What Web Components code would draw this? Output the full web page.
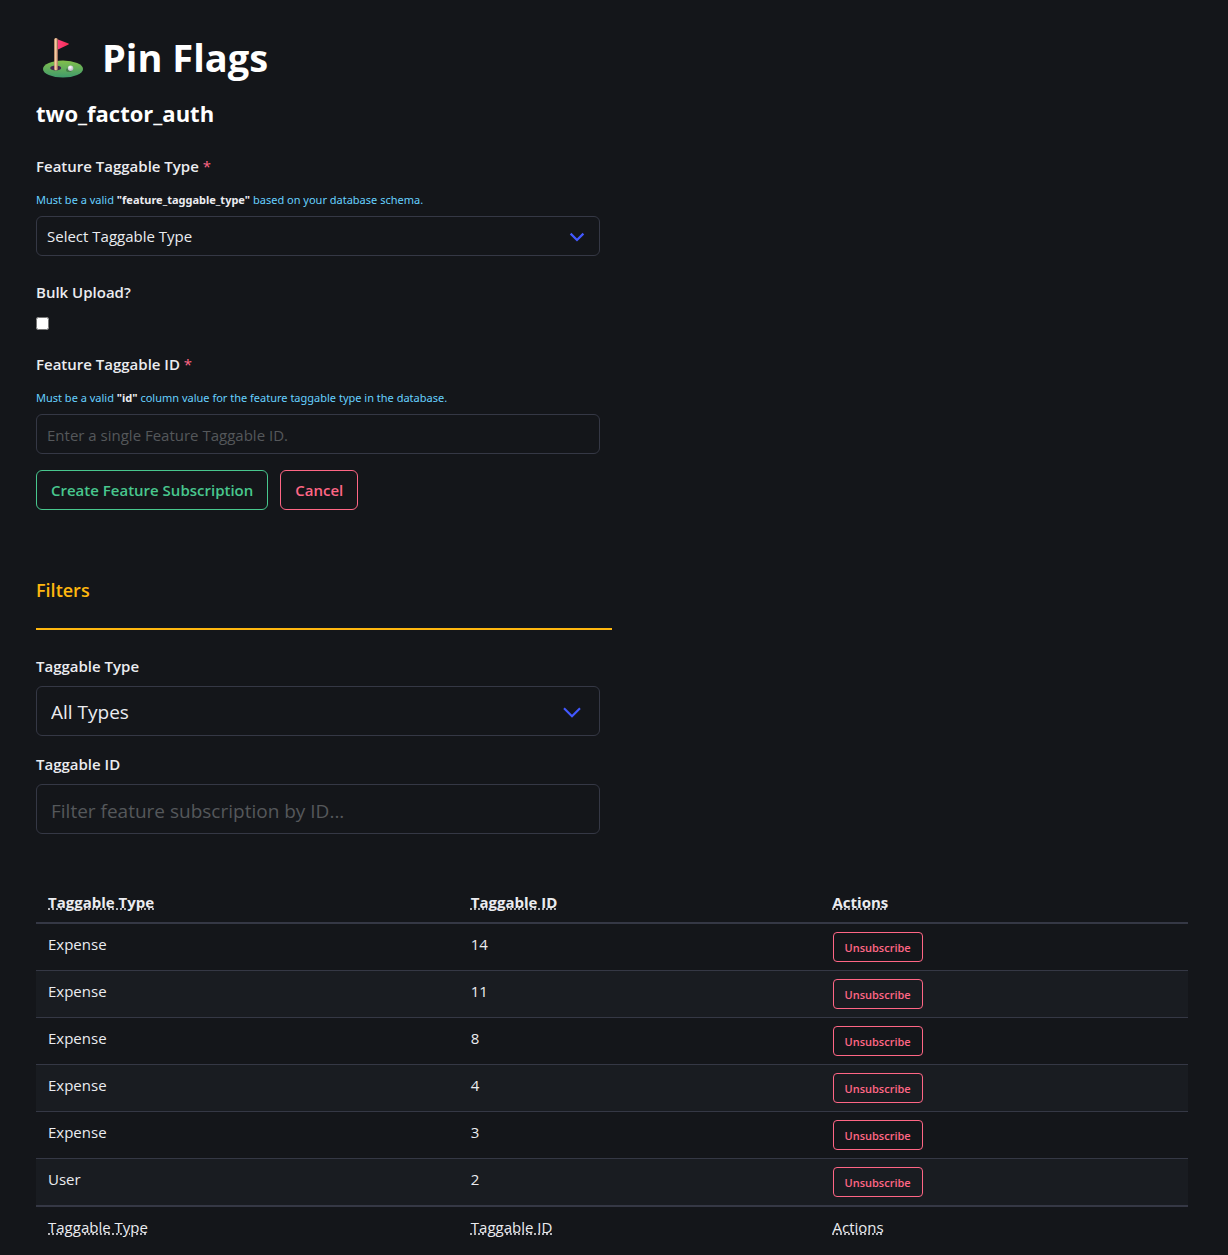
<!DOCTYPE html>
<html lang="en">
<head>
<meta charset="utf-8">
<title>Pin Flags</title>
<meta name="viewport" content="width=device-width, initial-scale=1">
<style>
:root {
  --bg: #14161a;
  --text: #ebecf0;
  --strong: #ffffff;
  --border: #353845;
  --stripe: #191c21;
  --placeholder: #55585b;
  --link: #4258ff;
  --info: #66d1ff;
  --success: #48c78e;
  --danger: #ff6685;
  --warning: #ffb70f;
}
body {
  margin: 0;
  background: var(--bg);
  color: var(--text);
  font: 15px/24px "Open Sans", "Noto Sans", sans-serif;
}
</style>
</head>
<body>
<pin-page>
  <pin-masthead slot="header" feature="two_factor_auth"></pin-masthead>
  <pin-subscribe-form></pin-subscribe-form>
  <pin-filters></pin-filters>
  <pin-table></pin-table>
</pin-page>

<script>
class PinElement extends HTMLElement {
  connectedCallback() {
    if (this.shadowRoot) return;
    this.attachShadow({ mode: "open" }).innerHTML =
      `<style>:host,*{box-sizing:border-box}${this.styles()}</style>${this.markup()}`;
  }
}

customElements.define("pin-page", class extends PinElement {
  styles() {
    return `
      :host { display: block; padding: 35px 40px 4px 36px; }
      main { display: flex; flex-direction: column; }`;
  }
  markup() { return `<slot name="header"></slot><main><slot></slot></main>`; }
});

customElements.define("pin-masthead", class extends PinElement {
  styles() {
    return `
      :host { display: block; color: var(--strong); }
      h1, h2 { margin: 0; font-weight: 700; }
      h1 { display: flex; align-items: center; gap: 12px; font-size: 38px; line-height: 45px; }
      h2 { margin-top: 18px; font-size: 22px; line-height: 30px; }
      svg { width: 54px; height: 45px; flex: none; }`;
  }
  markup() {
    return `
      <h1>
        <svg viewBox="0 -1 54 45" aria-hidden="true">
          <defs>
            <linearGradient id="turf" x1="0" y1="0" x2="0" y2="1">
              <stop offset="0" stop-color="#83bf4b"/><stop offset="1" stop-color="#3f9a6c"/>
            </linearGradient>
            <linearGradient id="pole">
              <stop offset="0" stop-color="#d99b78"/><stop offset=".4" stop-color="#f8d3a5"/><stop offset="1" stop-color="#b8755e"/>
            </linearGradient>
            <linearGradient id="flag">
              <stop offset="0" stop-color="#ff3d7c"/><stop offset="1" stop-color="#f5304f"/>
            </linearGradient>
            <radialGradient id="ball" cx=".4" cy=".3" r=".8">
              <stop offset="0" stop-color="#ffffff"/><stop offset="1" stop-color="#a9a4b4"/>
            </radialGradient>
          </defs>
          <ellipse cx="27" cy="33" rx="20" ry="8.600" fill="url(#turf)"/>
          <ellipse cx="19.700" cy="32" rx="5.500" ry="2.500" fill="#40264f"/>
          <path d="M22 3.500 L32.500 7.500 Q33.300 8 32.500 8.600 L22 13.400Z" fill="url(#flag)"/>
          <path d="M18.200 3.500 Q18.200 2 20 2 Q21.800 2 21.800 3.500 V33.500 Q20 35.200 18.200 33.500Z" fill="url(#pole)"/>
          <ellipse cx="33" cy="34" rx="3" ry="2" fill="#45804a"/>
          <circle cx="34.600" cy="32.300" r="2.700" fill="url(#ball)"/>
        </svg>
        <span>Pin Flags</span>
      </h1>
      <h2>${this.getAttribute("feature")}</h2>`;
  }
});

/* One labelled control: kind = select | text | check; size = normal | large */
customElements.define("pin-field", class extends PinElement {
  styles() {
    return `
      :host { display: block; }
      label { display: block; font-weight: 600; }
      label i { font-style: normal; font-weight: 400; color: var(--danger); }
      p { margin: 13px 0 7px; font-family: "Noto Sans", sans-serif; font-size: 11px; line-height: 18px; color: var(--info); }
      ::slotted(strong) { color: var(--text); font-weight: 700; }
      .control { display: grid; align-items: center; }
      .control > * { grid-area: 1 / 1; }
      .control.bare { margin-top: 8px; }
      select, input[type=text] {
        appearance: none; width: 100%; height: 40px; margin: 0; padding: 0 10px;
        border: 1px solid var(--border); border-radius: 6px; outline: 0;
        background: var(--bg); color: var(--text); font: inherit;
      }
      input[type=text] { padding-top: 2px; }
      .large select, .large input { height: 50px; padding: 2px 14px 0; font-size: 19px; }
      .large input { padding-top: 4px; }
      select:focus, input:focus { border-color: var(--link); }
      input::placeholder { color: var(--placeholder); opacity: 1; }
      svg { justify-self: end; width: 16px; height: 10px; margin: 2px 15px 0 0; pointer-events: none;
            fill: none; stroke: var(--link); stroke-width: 2.200; }
      .large svg { width: 20px; height: 13px; margin-right: 18px; stroke-width: 1.700; }
      input[type=checkbox] { display: block; width: 13px; height: 13px; margin: 13px 0 0; }`;
  }
  markup() {
    const a = n => this.getAttribute(n) || "";
    const large = a("size") === "large" ? "large" : "";
    const bare = this.hasAttribute("help") ? "" : "bare";
    const label = `<label for="c">${a("label")}${this.hasAttribute("required") ? " <i>*</i>" : ""}</label>`;
    const help = this.hasAttribute("help") ? `<p><slot></slot></p>` : "";
    if (a("kind") === "check") return `${label}<input id="c" type="checkbox">`;
    const control = a("kind") === "select"
      ? `<select id="c"><option>${a("value")}</option></select>
         <svg viewBox="0 0 16 10" aria-hidden="true"><path d="M1.600 1.600 L8 8 L14.400 1.600"/></svg>`
      : `<input id="c" type="text" placeholder="${a("value")}">`;
    return `${label}${help}<div class="control ${large} ${bare}">${control}</div>`;
  }
});

customElements.define("pin-button", class extends PinElement {
  styles() {
    return `
      :host { display: inline-block; vertical-align: top; --tone: var(--danger); }
      :host([tone=success]) { --tone: var(--success); }
      button {
        display: block; height: 40px; margin: 0; padding: 0 14px; border: 1px solid var(--tone);
        border-radius: 6px; background: transparent; color: var(--tone);
        font: inherit; font-weight: 600; cursor: pointer; white-space: nowrap;
      }
      :host([small]) button { height: 30px; padding: 1px 11px 0; border-radius: 4px; font-size: 11px; }`;
  }
  markup() { return `<button type="button"><slot></slot></button>`; }
});

customElements.define("pin-subscribe-form", class extends PinElement {
  styles() {
    return `
      :host { display: block; width: 50%; padding: 26px 12px 0 0; }
      form { display: flex; flex-direction: column; }
      .check { margin: 24px 0 22px; }
      .actions { display: flex; gap: 12px; margin-top: 16px; }`;
  }
  markup() {
    return `
      <form>
        <pin-field kind="select" label="Feature Taggable Type" value="Select Taggable Type" required help>Must be a valid <strong>"feature_taggable_type"</strong> based on your database schema.</pin-field>
        <pin-field class="check" kind="check" label="Bulk Upload?"></pin-field>
        <pin-field kind="text" label="Feature Taggable ID" value="Enter a single Feature Taggable ID." required help>Must be a valid <strong>"id"</strong> column value for the feature taggable type in the database.</pin-field>
        <div class="actions">
          <pin-button tone="success">Create Feature Subscription</pin-button>
          <pin-button>Cancel</pin-button>
        </div>
      </form>`;
  }
});

customElements.define("pin-filters", class extends PinElement {
  styles() {
    return `
      :host { display: block; width: 50%; margin-top: 68px; }
      h3 { margin: 0; padding-bottom: 26px; border-bottom: 2px solid var(--warning);
           color: var(--warning); font-size: 18px; font-weight: 600; line-height: 24px; }
      .fields { display: flex; flex-direction: column; gap: 16px; padding: 24px 12px 0 0; }`;
  }
  markup() {
    return `
      <h3>Filters</h3>
      <div class="fields">
        <pin-field kind="select" size="large" label="Taggable Type" value="All Types"></pin-field>
        <pin-field kind="text" size="large" label="Taggable ID" value="Filter feature subscription by ID..."></pin-field>
      </div>`;
  }
});

customElements.define("pin-table", class extends PinElement {
  styles() {
    return `
      :host { display: block; margin-top: 48px; }
      table { width: 100%; border-collapse: separate; border-spacing: 0; table-layout: fixed; }
      th, td { padding: 8px 12px; text-align: left; vertical-align: top; font-weight: 400; }
      thead th { border-bottom: 2px solid var(--border); font-weight: 700; }
      tbody td { border-bottom: 1px solid var(--border); }
      tbody tr:last-child td { border-bottom-width: 2px; }
      tbody tr:nth-child(even) { background: var(--stripe); }
      tbody td:last-child { line-height: 0; }
      pin-button { line-height: 24px; }
      .type { width: 36.7%; } .id { width: 31.4%; }
      abbr { text-decoration: underline dotted; }`;
  }
  markup() {
    const rows = [["Expense", 14], ["Expense", 11], ["Expense", 8], ["Expense", 4], ["Expense", 3], ["User", 2]];
    const heads = ["Taggable Type", "Taggable ID", "Actions"].map(h => `<th scope="col"><abbr>${h}</abbr></th>`).join("");
    return `
      <table>
        <colgroup><col class="type"><col class="id"><col></colgroup>
        <thead><tr>${heads}</tr></thead>
        <tbody>${rows.map(([t, id]) =>
          `<tr><td>${t}</td><td>${id}</td><td><pin-button small>Unsubscribe</pin-button></td></tr>`).join("")}</tbody>
        <tfoot><tr>${heads}</tr></tfoot>
      </table>`;
  }
});
</script>
</body>
</html>
